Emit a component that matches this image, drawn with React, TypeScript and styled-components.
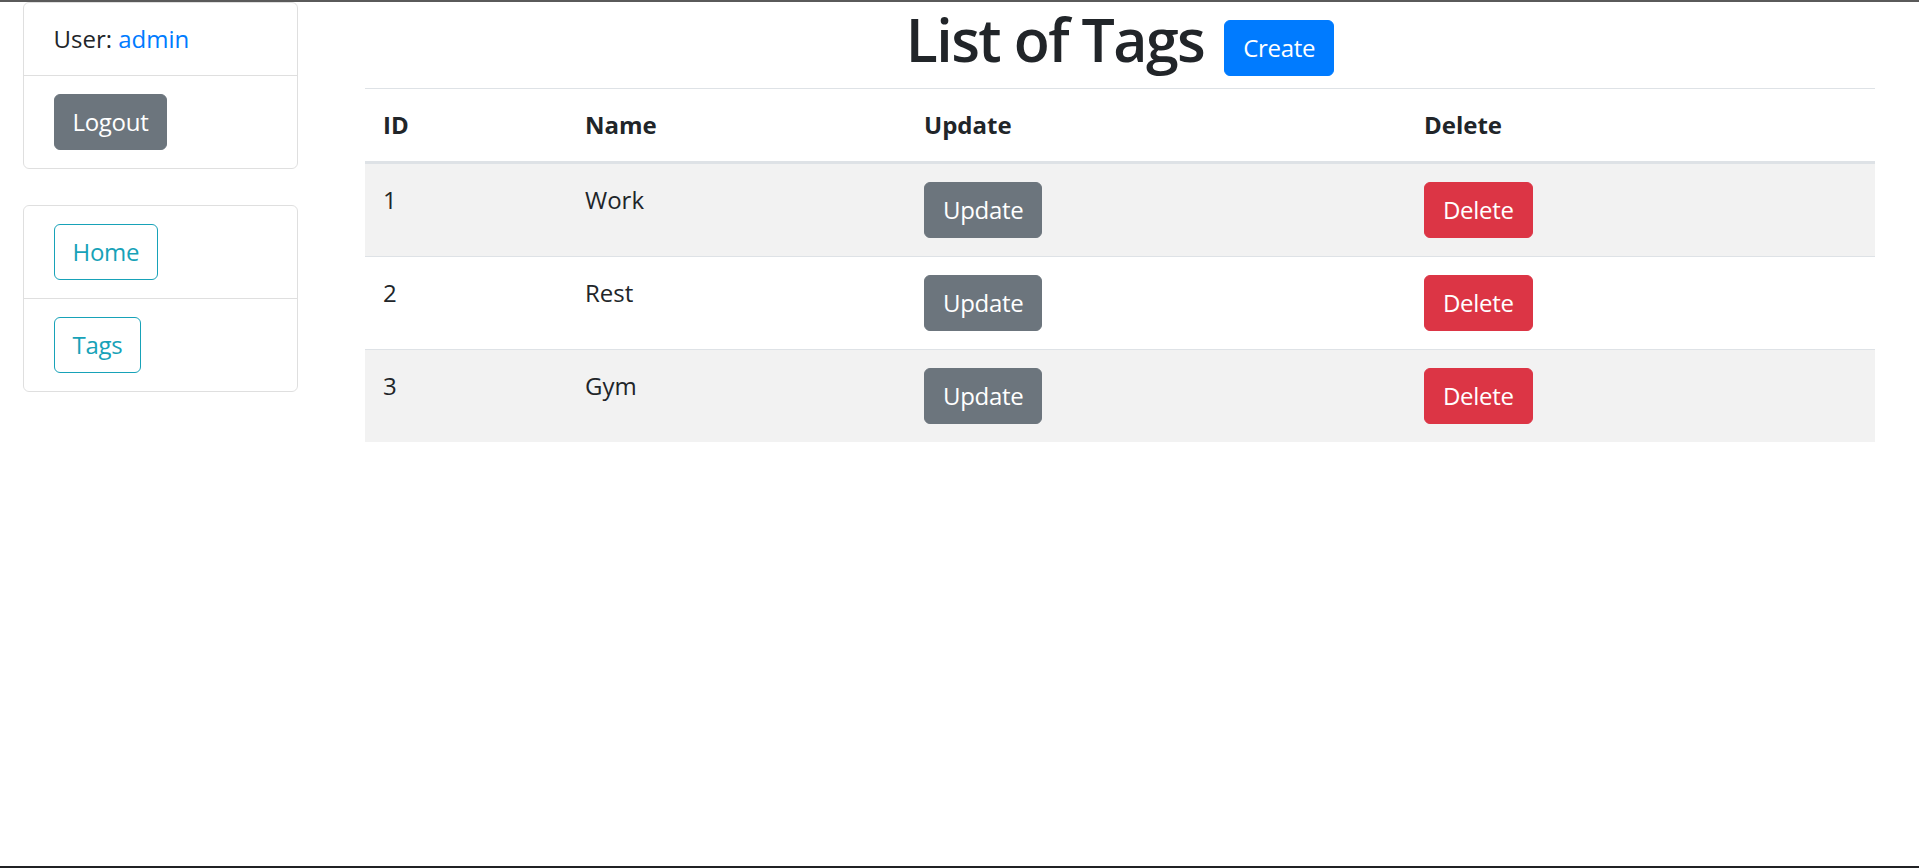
import React from 'react';
import styled, { createGlobalStyle, css } from 'styled-components';

const GlobalStyle = createGlobalStyle`
    html, body {
        margin: 0;
        padding: 0;
        background: #fff;
    }
    body {
        font-family: "Open Sans", "Noto Sans", sans-serif;
        font-size: 24px;
        line-height: 1.5;
        color: #212529;
    }
    * {
        box-sizing: border-box;
    }
`;

const colors = {
    primary: '#007bff',
    secondary: '#6c757d',
    danger: '#dc3545',
    info: '#17a2b8',
} as const;

type Variant = keyof typeof colors;

const Page = styled.div`
    height: 868px;
    display: flex;
    flex-direction: column;
    border-top: 2px solid #5a5a5a;
    border-bottom: 2px solid #202124;
    overflow: hidden;
`;

const Row = styled.div`
    flex: 1;
    display: flex;
    align-items: flex-start;
`;

const Sidebar = styled.aside`
    width: 320px;
    flex-shrink: 0;
    padding: 0 22.5px;
    display: flex;
    flex-direction: column;
    gap: 36px;
`;

const Main = styled.main`
    flex: 1;
    padding: 0 44px 0 45px;
`;

const ListGroup = styled.ul`
    list-style: none;
    margin: 0;
    padding: 0;
    border: 1.5px solid rgba(0, 0, 0, 0.125);
    border-radius: 6px;
`;

const ListItem = styled.li`
    padding: 18px 30px;
    & + & {
        border-top: 1.5px solid rgba(0, 0, 0, 0.125);
    }
`;

const Link = styled.a`
    color: ${colors.primary};
    text-decoration: none;
`;

const Button = styled.button<{ $variant: Variant; $outline?: boolean }>`
    display: inline-block;
    font-family: inherit;
    font-size: 24px;
    line-height: 36px;
    letter-spacing: -0.3px;
    padding: 9px 18px;
    border-radius: 6px;
    cursor: pointer;
    ${({ $variant, $outline }) =>
        $outline
            ? css`
                  background: transparent;
                  color: ${colors[$variant]};
                  border: 1.5px solid ${colors[$variant]};
              `
            : css`
                  background: ${colors[$variant]};
                  color: #fff;
                  border: 1.5px solid ${colors[$variant]};
              `}
`;

const Header = styled.div`
    display: flex;
    justify-content: center;
    align-items: flex-start;
    gap: 20px;
    height: 86px;
`;

const Title = styled.h1`
    margin: 0;
    font-size: 59px;
    font-weight: 600;
    line-height: 74px;
    letter-spacing: -1.6px;
`;

const CreateButton = styled(Button)`
    margin-top: 18px;
`;

const Table = styled.table`
    width: 100%;
    border-collapse: collapse;
    font-size: 24px;
`;

const Th = styled.th<{ $width?: number }>`
    text-align: left;
    font-weight: 700;
    padding: 18px;
    line-height: 36px;
    border-top: 1.5px solid #dee2e6;
    border-bottom: 3px solid #dee2e6;
    width: ${({ $width }) => ($width ? `${$width}px` : 'auto')};
`;

const Tr = styled.tr`
    &:nth-child(odd) {
        background: #f2f2f2;
    }
`;

const Td = styled.td`
    padding: 18px;
    line-height: 36px;
    vertical-align: top;
    border-top: 1.5px solid #dee2e6;
`;

const tags = [
    { id: 1, name: 'Work' },
    { id: 2, name: 'Rest' },
    { id: 3, name: 'Gym' },
];

export default function App() {
    return (
        <>
            <GlobalStyle />
            <Page>
                <Row>
                    <Sidebar>
                        <ListGroup>
                            <ListItem>
                                User: <Link href="#">admin</Link>
                            </ListItem>
                            <ListItem>
                                <Button $variant="secondary">Logout</Button>
                            </ListItem>
                        </ListGroup>
                        <ListGroup>
                            <ListItem>
                                <Button $variant="info" $outline>Home</Button>
                            </ListItem>
                            <ListItem>
                                <Button $variant="info" $outline>Tags</Button>
                            </ListItem>
                        </ListGroup>
                    </Sidebar>
                    <Main>
                        <Header>
                            <Title>List of Tags</Title>
                            <CreateButton $variant="primary">Create</CreateButton>
                        </Header>
                        <Table>
                            <thead>
                                <tr>
                                    <Th $width={202}>ID</Th>
                                    <Th $width={339}>Name</Th>
                                    <Th $width={500}>Update</Th>
                                    <Th>Delete</Th>
                                </tr>
                            </thead>
                            <tbody>
                                {tags.map((tag) => (
                                    <Tr key={tag.id}>
                                        <Td>{tag.id}</Td>
                                        <Td>{tag.name}</Td>
                                        <Td>
                                            <Button $variant="secondary">Update</Button>
                                        </Td>
                                        <Td>
                                            <Button $variant="danger">Delete</Button>
                                        </Td>
                                    </Tr>
                                ))}
                            </tbody>
                        </Table>
                    </Main>
                </Row>
            </Page>
        </>
    );
}
